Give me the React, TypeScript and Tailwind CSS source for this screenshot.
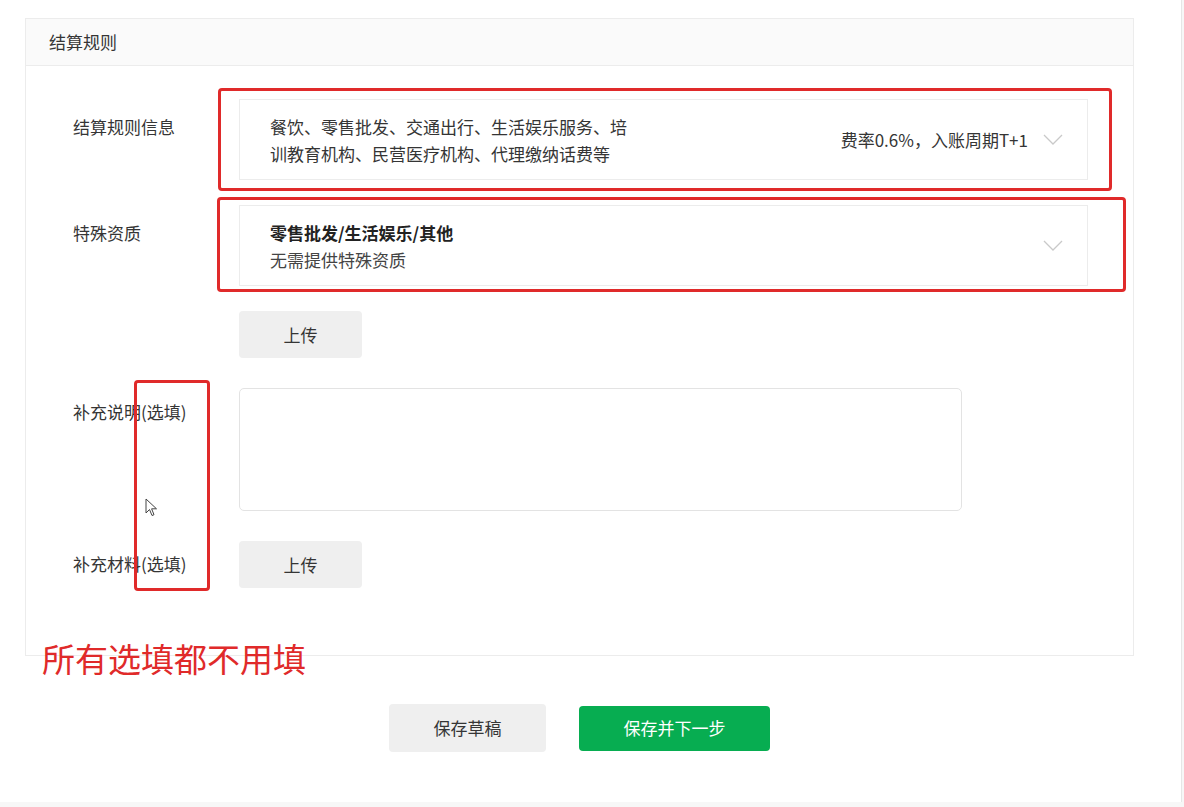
import React from 'react'

const font = { fontFamily: '"Noto Sans CJK SC", "Noto Sans", sans-serif' }

function Chevron() {
  return (
    <svg width="20" height="11" viewBox="0 0 20 11" fill="none" className="flex-shrink-0">
      <path d="M1 1 L10 10 L19 1" stroke="#c9c9c9" strokeWidth="1.3" />
    </svg>
  )
}

function UploadButton() {
  return (
    <button className="w-[123px] h-[47px] rounded-[4px] bg-[#efefef] text-[17px] text-[#353535]">
      上传
    </button>
  )
}

function Row({
  label,
  labelPad,
  children,
}: {
  label?: string
  labelPad?: string
  children: React.ReactNode
}) {
  return (
    <div className="flex">
      <div className={`w-[213px] pl-[47px] flex-shrink-0 text-[17px] leading-[20px] text-[#353535] ${labelPad || ''}`}>
        {label}
      </div>
      <div className="flex-1">{children}</div>
    </div>
  )
}

export default function App() {
  return (
    <div className="relative w-[1184px] h-[807px] overflow-hidden bg-[#f7f7f7]" style={font}>
      <div className="w-[1182px] h-[802px] bg-white border-r border-[#e6e6e6] pt-[18px] pl-[25px]">
        {/* Card */}
        <div className="w-[1109px] border border-[#ececec]">
          <div className="h-[47px] bg-[#fafafa] border-b border-[#ececec] flex items-center pl-[23px] text-[17px] text-[#353535]">
            结算规则
          </div>

          <div className="pt-[33px] pb-[67px] flex flex-col">
            <Row label="结算规则信息" labelPad="pt-[18px]">
              <div className="w-[849px] h-[81px] border border-[#ececec] flex items-center pl-[30px] pr-[24px]">
                <div className="flex-1 text-[17px] leading-[27px] text-[#353535]">
                  <div>餐饮、零售批发、交通出行、生活娱乐服务、培</div>
                  <div>训教育机构、民营医疗机构、代理缴纳话费等</div>
                </div>
                <span className="text-[17px] text-[#353535] mr-[15px]">费率0.6%，入账周期T+1</span>
                <Chevron />
              </div>
            </Row>

            <div className="h-[25px]" />

            <Row label="特殊资质" labelPad="pt-[18px]">
              <div className="w-[849px] h-[81px] border border-[#ececec] flex items-center pl-[30px] pr-[24px]">
                <div className="flex-1 text-[17px] leading-[27px]">
                  <div className="font-bold text-[#222]">零售批发/生活娱乐/其他</div>
                  <div className="text-[#444]">无需提供特殊资质</div>
                </div>
                <Chevron />
              </div>
            </Row>

            <div className="h-[25px]" />

            <Row>
              <UploadButton />
            </Row>

            <div className="h-[30px]" />

            <Row label="补充说明(选填)" labelPad="pt-[14px]">
              <textarea className="block w-[723px] h-[123px] border border-[#e3e3e3] rounded-[5px] resize-none outline-none" />
            </Row>

            <div className="h-[30px]" />

            <Row label="补充材料(选填)" labelPad="pt-[13px]">
              <UploadButton />
            </Row>
          </div>
        </div>

        {/* Footer buttons */}
        <div className="w-[1109px] flex justify-center items-center gap-[33px] mt-[48px]">
          <button className="w-[157px] h-[48px] rounded-[4px] bg-[#efefef] text-[17px] text-[#353535]">
            保存草稿
          </button>
          <button className="w-[191px] h-[45px] rounded-[4px] bg-[#07ad51] text-[17px] text-white">
            保存并下一步
          </button>
        </div>
      </div>

      {/* Annotations */}
      <div className="absolute left-[218px] top-[88px] w-[894px] h-[103px] border-[3px] border-[#e02a2a] rounded-[4px]" />
      <div className="absolute left-[217px] top-[197px] w-[909px] h-[95px] border-[3px] border-[#e02a2a] rounded-[4px]" />
      <div className="absolute left-[134px] top-[380px] w-[76px] h-[211px] border-[3px] border-[#e02a2a] rounded-[4px]" />
      <div className="absolute left-[42px] top-[636px] text-[33px] leading-[44px] text-[#e02a2a]">
        所有选填都不用填
      </div>

      {/* Mouse cursor */}
      <svg className="absolute left-[145px] top-[498px]" width="14" height="20" viewBox="0 0 14 20">
        <path d="M1 1 L1 15 L4.5 11.5 L7 17.5 L9 16.7 L6.6 10.8 L11.5 10.8 Z" fill="#fff" stroke="#444" strokeWidth="1" />
      </svg>
    </div>
  )
}
